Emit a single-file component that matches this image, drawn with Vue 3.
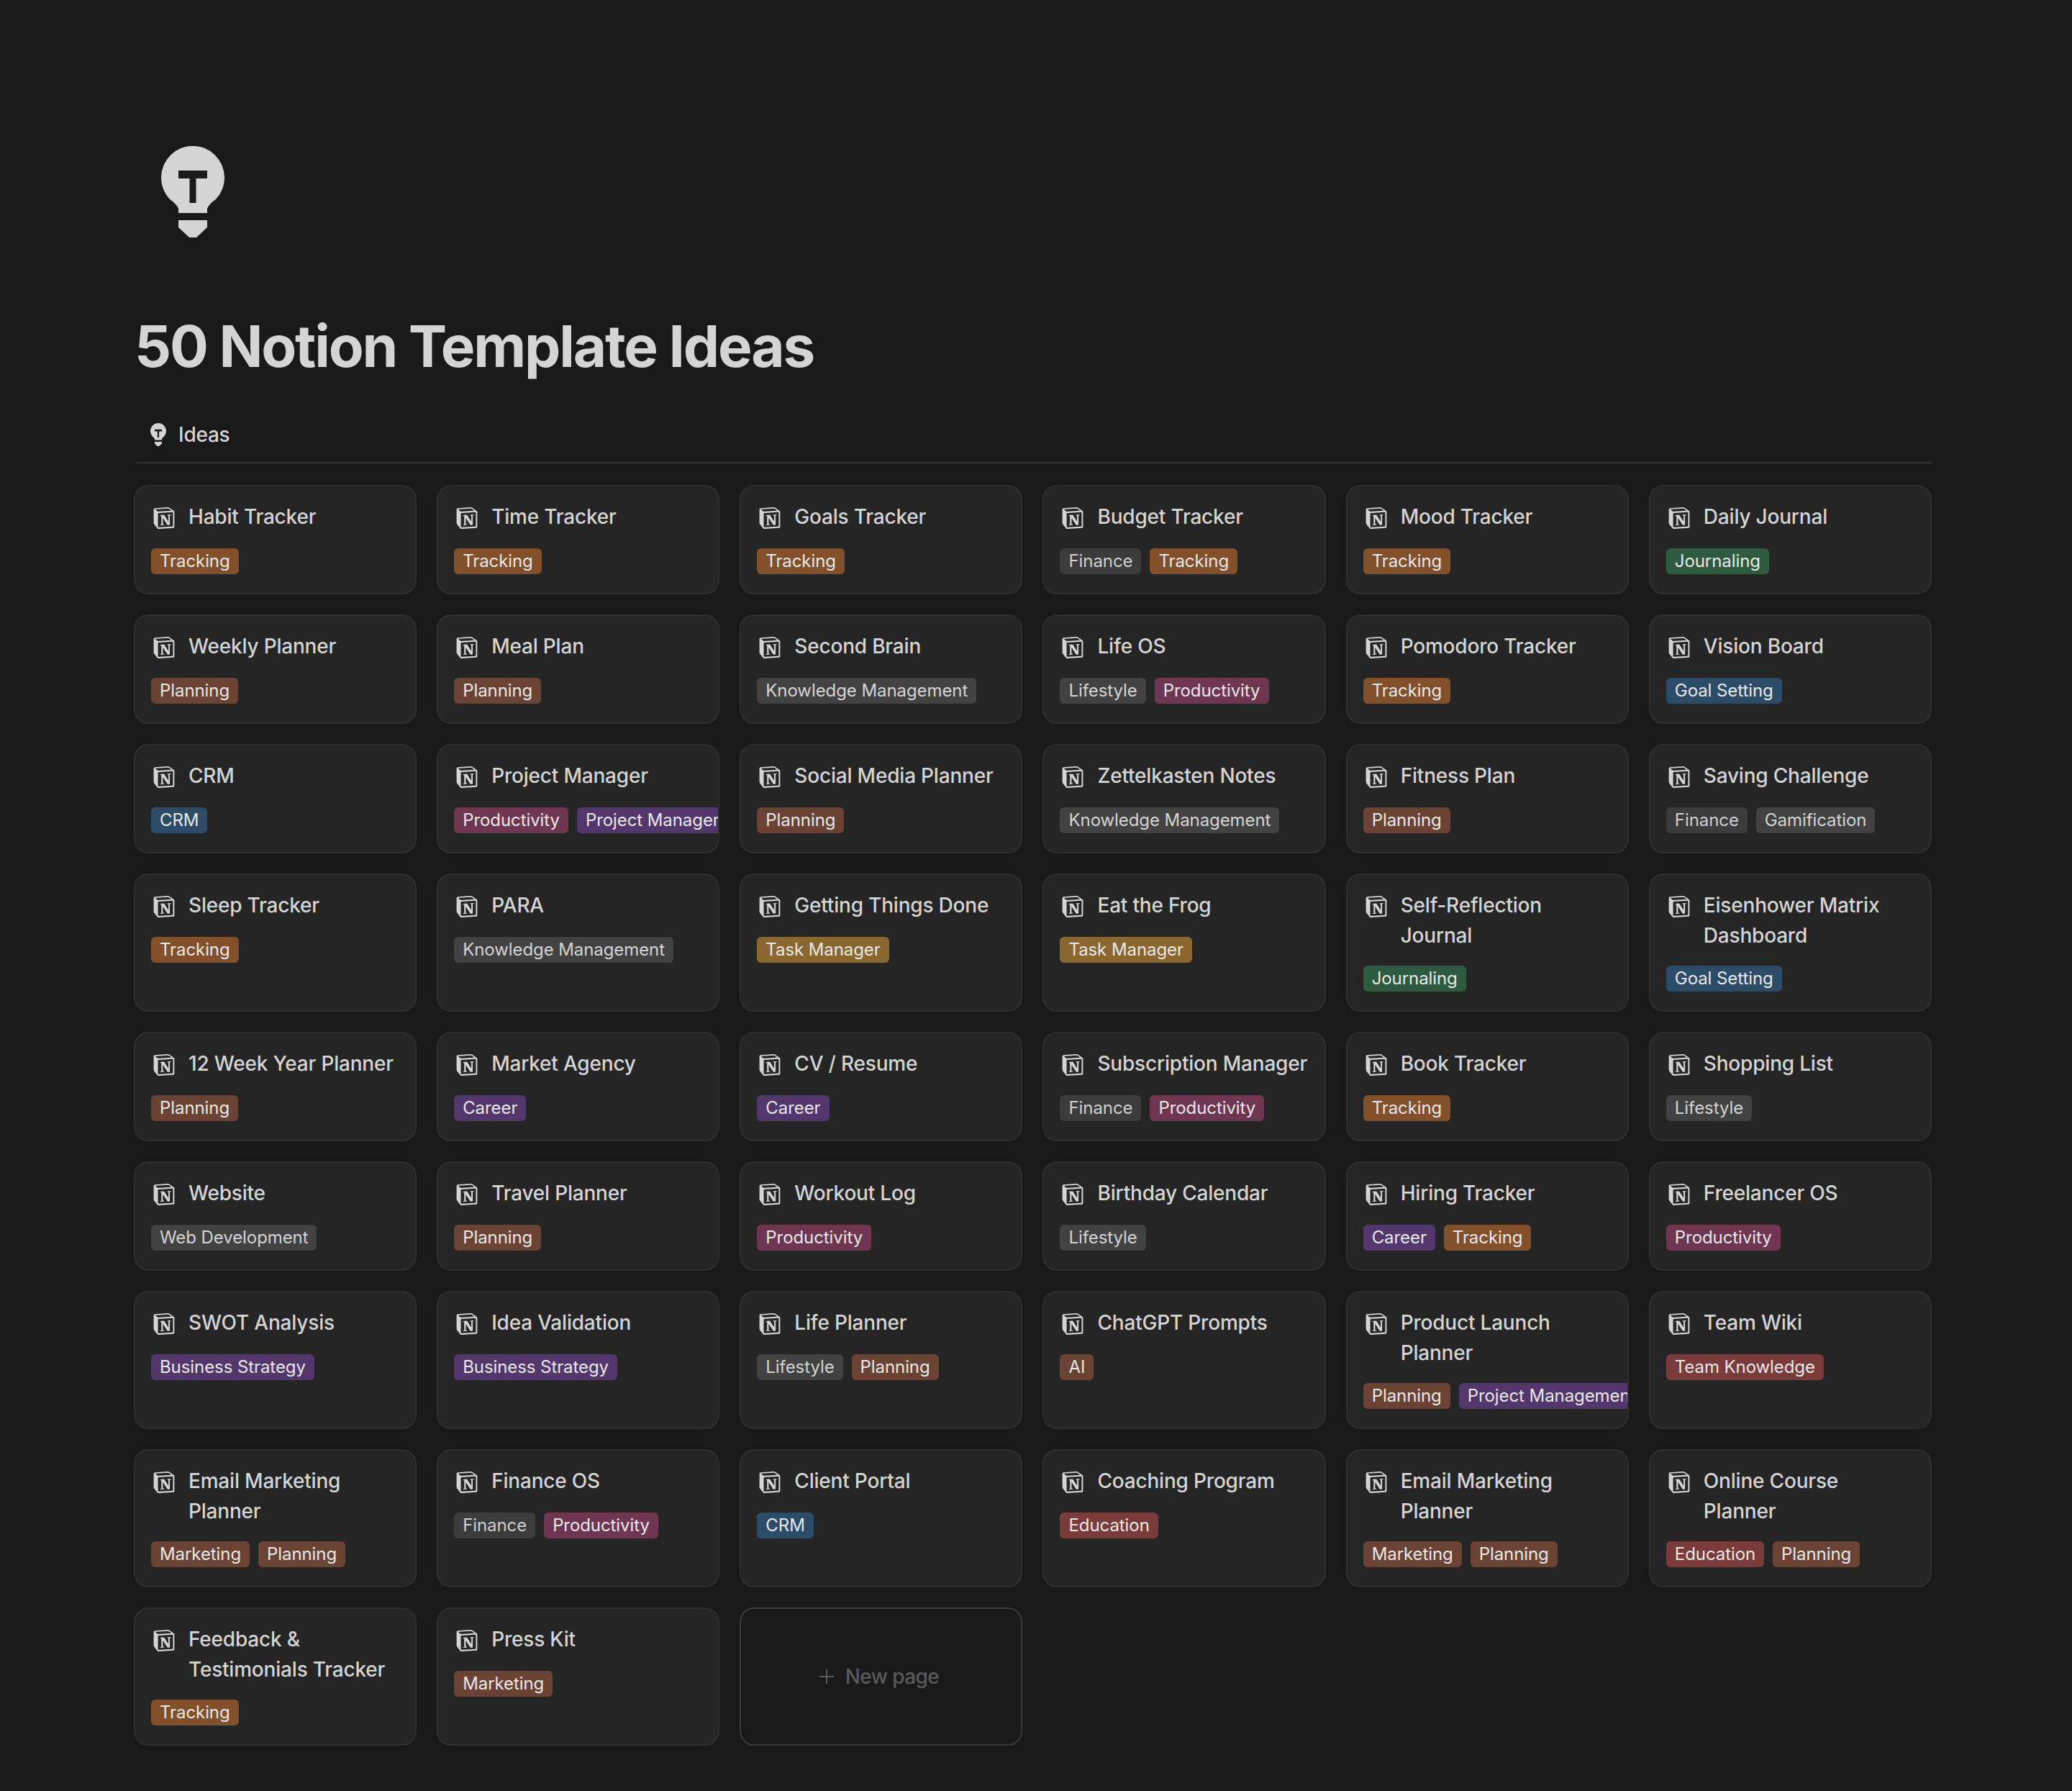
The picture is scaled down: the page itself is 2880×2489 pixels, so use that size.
<script setup>
const notion = "M4.459 4.208c.746.606 1.026.56 2.428.466l13.215-.793c.28 0 .047-.28-.046-.326L17.86 1.968c-.42-.326-.981-.7-2.055-.607L3.01 2.295c-.466.046-.56.28-.374.466zm.793 3.08v13.904c0 .747.373 1.027 1.214.98l14.523-.84c.841-.046.935-.56.935-1.167V6.354c0-.606-.233-.933-.748-.887l-15.177.887c-.56.047-.747.327-.747.933zm14.337.745c.093.42 0 .84-.42.888l-.7.14v10.264c-.608.327-1.168.514-1.635.514-.748 0-.935-.234-1.495-.933l-4.577-7.186v6.952L12.21 19s0 .84-1.168.84l-3.222.186c-.093-.186 0-.653.327-.746l.84-.233V9.854L7.822 9.76c-.094-.42.14-1.026.793-1.073l3.456-.233 4.764 7.279v-6.44l-1.215-.139c-.093-.514.28-.887.747-.933zM1.936 1.035l13.31-.98c1.634-.14 2.055-.047 3.082.7l4.249 2.986c.7.513.934.653.934 1.213v16.378c0 1.026-.373 1.634-1.68 1.726l-15.458.934c-.98.047-1.448-.093-1.962-.747l-3.129-4.06c-.56-.747-.793-1.306-.793-1.96V2.667c0-.839.374-1.54 1.447-1.632z"

const tagColors = {
  "Tracking": "orange",
  "Finance": "plain",
  "Journaling": "green",
  "Planning": "brown",
  "Knowledge Management": "gray",
  "Lifestyle": "gray",
  "Productivity": "pink",
  "Goal Setting": "blue",
  "CRM": "blue",
  "Project Manager": "purple",
  "Project Management": "purple",
  "Gamification": "gray",
  "Task Manager": "yellow",
  "Career": "purple",
  "Web Development": "gray",
  "Business Strategy": "purple",
  "AI": "brown",
  "Team Knowledge": "red",
  "Marketing": "brown",
  "Education": "red",
}

const pages = [
  { title: "Habit Tracker", tags: ["Tracking"] },
  { title: "Time Tracker", tags: ["Tracking"] },
  { title: "Goals Tracker", tags: ["Tracking"] },
  { title: "Budget Tracker", tags: ["Finance", "Tracking"] },
  { title: "Mood Tracker", tags: ["Tracking"] },
  { title: "Daily Journal", tags: ["Journaling"] },
  { title: "Weekly Planner", tags: ["Planning"] },
  { title: "Meal Plan", tags: ["Planning"] },
  { title: "Second Brain", tags: ["Knowledge Management"] },
  { title: "Life OS", tags: ["Lifestyle", "Productivity"] },
  { title: "Pomodoro Tracker", tags: ["Tracking"] },
  { title: "Vision Board", tags: ["Goal Setting"] },
  { title: "CRM", tags: ["CRM"] },
  { title: "Project Manager", tags: ["Productivity", "Project Manager"] },
  { title: "Social Media Planner", tags: ["Planning"] },
  { title: "Zettelkasten Notes", tags: ["Knowledge Management"] },
  { title: "Fitness Plan", tags: ["Planning"] },
  { title: "Saving Challenge", tags: ["Finance", "Gamification"] },
  { title: "Sleep Tracker", tags: ["Tracking"] },
  { title: "PARA", tags: ["Knowledge Management"] },
  { title: "Getting Things Done", tags: ["Task Manager"] },
  { title: "Eat the Frog", tags: ["Task Manager"] },
  { title: "Self-Reflection Journal", tags: ["Journaling"] },
  { title: "Eisenhower Matrix Dashboard", tags: ["Goal Setting"] },
  { title: "12 Week Year Planner", tags: ["Planning"] },
  { title: "Market Agency", tags: ["Career"] },
  { title: "CV / Resume", tags: ["Career"] },
  { title: "Subscription Manager", tags: ["Finance", "Productivity"] },
  { title: "Book Tracker", tags: ["Tracking"] },
  { title: "Shopping List", tags: ["Lifestyle"] },
  { title: "Website", tags: ["Web Development"] },
  { title: "Travel Planner", tags: ["Planning"] },
  { title: "Workout Log", tags: ["Productivity"] },
  { title: "Birthday Calendar", tags: ["Lifestyle"] },
  { title: "Hiring Tracker", tags: ["Career", "Tracking"] },
  { title: "Freelancer OS", tags: ["Productivity"] },
  { title: "SWOT Analysis", tags: ["Business Strategy"] },
  { title: "Idea Validation", tags: ["Business Strategy"] },
  { title: "Life Planner", tags: ["Lifestyle", "Planning"] },
  { title: "ChatGPT Prompts", tags: ["AI"] },
  { title: "Product Launch Planner", tags: ["Planning", "Project Management"] },
  { title: "Team Wiki", tags: ["Team Knowledge"] },
  { title: "Email Marketing Planner", tags: ["Marketing", "Planning"] },
  { title: "Finance OS", tags: ["Finance", "Productivity"] },
  { title: "Client Portal", tags: ["CRM"] },
  { title: "Coaching Program", tags: ["Education"] },
  { title: "Email Marketing Planner", tags: ["Marketing", "Planning"] },
  { title: "Online Course Planner", tags: ["Education", "Planning"] },
  { title: "Feedback & Testimonials Tracker", tags: ["Tracking"] },
  { title: "Press Kit", tags: ["Marketing"] },
]
</script>

<template>
  <main class="page">
    <svg class="page-icon" viewBox="0 0 88 127">
      <path class="bulb" d="M24 93V87C22 82 18 78 12 74A44 44 0 1 1 76 74C70 78 66 82 64 87V93ZM24 103H64V113L49 127H39L24 113Z" />
      <path class="bulb-t" d="M24 34H64V45H48.5V79H39.5V45H24Z" />
    </svg>

    <h1 class="title">50 Notion Template Ideas</h1>

    <div class="tabs">
      <svg class="tab-icon" viewBox="0 0 88 127">
        <path class="bulb" d="M24 93V87C22 82 18 78 12 74A44 44 0 1 1 76 74C70 78 66 82 64 87V93ZM24 103H64V113L49 127H39L24 113Z" />
        <path class="bulb-t" d="M24 34H64V45H48.5V79H39.5V45H24Z" />
      </svg>
      <span>Ideas</span>
    </div>

    <section class="gallery">
      <article v-for="(p, i) in pages" :key="i" class="card">
        <div class="card-title">
          <svg class="n-icon" viewBox="0 0 24 24"><path :d="notion" /></svg>
          <span class="card-name">{{ p.title }}</span>
        </div>
        <div class="tags">
          <span v-for="t in p.tags" :key="t" class="tag" :class="tagColors[t]">{{ t }}</span>
        </div>
      </article>
      <div class="new-page">
        <svg class="plus" viewBox="0 0 20 20"><path d="M10 0V20M0 10H20" /></svg>
        <span>New page</span>
      </div>
    </section>
  </main>
</template>

<style scoped>
.page {
  box-sizing: border-box;
  min-height: 2489px;
  padding: 203px 195px 65px 186px;
  background: #191919;
  color: #d4d4d4;
  font-family: Inter, "Liberation Sans", sans-serif;
}

.page-icon {
  display: block;
  width: 88px;
  height: 127px;
  margin-left: 38px;
}

.bulb {
  fill: #d4d4d4;
}

.bulb-t {
  fill: #191919;
}

.title {
  margin: 103px 0 0 1px;
  font-size: 80px;
  line-height: 96px;
  font-weight: 700;
  letter-spacing: -2.2px;
  color: #d4d4d4;
}

.tabs {
  display: flex;
  align-items: center;
  gap: 17px;
  height: 76px;
  margin: 37px 0 0 2px;
  padding-left: 21px;
  border-bottom: 2px solid #2f2f2f;
  font-size: 28px;
  font-weight: 500;
  letter-spacing: -0.25px;
}

.tab-icon {
  width: 22px;
  height: 32px;
}

.gallery {
  display: grid;
  grid-template-columns: repeat(6, minmax(0, 1fr));
  gap: 28px;
  margin-top: 30px;
}

.card {
  box-sizing: border-box;
  min-height: 152px;
  padding: 21px 0 26px 22px;
  background: #252525;
  border: 2px solid #2e2e2e;
  border-radius: 20px;
  overflow: hidden;
}

.card-title {
  display: flex;
  gap: 19px;
  min-height: 42px;
  padding-right: 21.5px;
  font-size: 28px;
  line-height: 42px;
  font-weight: 500;
  letter-spacing: -0.2px;
  color: #d4d4d4;
}

.card-name {
  margin-bottom: -2px;
}

.n-icon {
  flex: none;
  width: 30px;
  height: 30px;
  margin: 8px 0 0 3px;
  fill: #d4d4d4;
}

.tags {
  display: flex;
  gap: 12px;
  margin-top: 23px;
  white-space: nowrap;
  letter-spacing: -0.08px;
}

.tag {
  flex: none;
  height: 36px;
  padding: 0 12px;
  border-radius: 6px;
  font-size: 24px;
  line-height: 36px;
  color: #e8e8e8;
}

.orange { background: #82502a; }
.brown { background: #6a4334; }
.plain { background: #3c3c3c; color: #cfcfcf; }
.gray { background: #424242; color: #d4d4d4; }
.pink { background: #6f3651; }
.purple { background: #53376c; }
.blue { background: #2d4c68; }
.green { background: #2e5a40; }
.yellow { background: #8a6630; }
.red { background: #7c3b3b; }

.new-page {
  box-sizing: border-box;
  display: flex;
  align-items: center;
  justify-content: center;
  gap: 16px;
  padding-right: 6px;
  border: 2px solid #3a3a3a;
  border-radius: 20px;
  font-size: 28px;
  font-weight: 500;
  letter-spacing: -0.6px;
  color: #5a5a5a;
}

.plus {
  width: 20px;
  height: 20px;
  stroke: #5a5a5a;
  stroke-width: 2;
  fill: none;
}
</style>

<style>
html, body {
  margin: 0;
  background: #191919;
}
</style>
